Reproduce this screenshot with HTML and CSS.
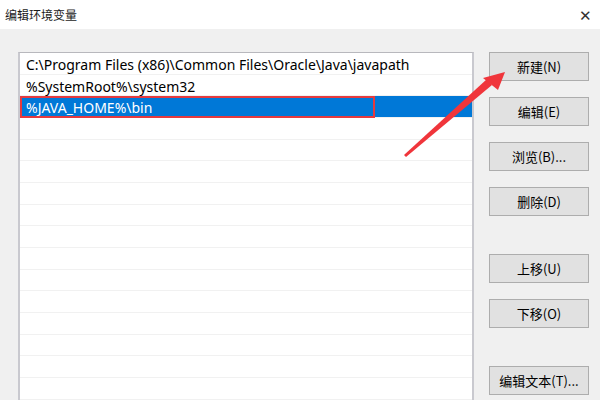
FILE: index.html
```html
<!DOCTYPE html>
<html lang="zh">

<head>
    <meta charset="UTF-8">
    <title>编辑环境变量</title>
    <link rel="stylesheet" href="styles.css">
</head>

<body>
    <div class="titlebar">
        <span class="title">编辑环境变量</span>
        <span class="close">&#x2715;</span>
    </div>

    <div class="content">
        <div class="pathlist">
            <div class="row">C:\Program Files (x86)\Common Files\Oracle\Java\javapath</div>
            <div class="row">%SystemRoot%\system32</div>
            <div class="row selected">%JAVA_HOME%\bin<span class="mark"></span></div>
            <div class="row"></div>
            <div class="row"></div>
            <div class="row"></div>
            <div class="row"></div>
            <div class="row"></div>
            <div class="row"></div>
            <div class="row"></div>
            <div class="row"></div>
            <div class="row"></div>
            <div class="row"></div>
            <div class="row"></div>
            <div class="row"></div>
            <div class="row"></div>
        </div>

        <div class="actions">
            <button class="btn">新建(N)</button>
            <button class="btn">编辑(E)</button>
            <button class="btn">浏览(B)...</button>
            <button class="btn">删除(D)</button>
            <button class="btn spaced">上移(U)</button>
            <button class="btn">下移(O)</button>
            <button class="btn spaced">编辑文本(T)...</button>
        </div>
    </div>

    <!-- annotation arrow pointing to the new button -->
    <svg class="arrow" width="600" height="400" viewBox="0 0 600 400">
        <polygon points="404,155 406,157 492,85 487,79" fill="#f0353b" />
        <polygon points="505,72 483,78 498,90" fill="#f0353b" />
    </svg>
</body>

</html>
```

FILE: styles.css
```css
/* General Styles */

body {
    font-family: "Noto Sans", "Noto Sans CJK SC", sans-serif;
    margin: 0;
    padding: 0;
    width: 600px;
    height: 400px;
    overflow: hidden;
    background: #f0f0f0;
    position: relative;
    color: #000;
}

.titlebar {
    height: 29px;
    background: #fff;
    display: flex;
    align-items: center;
    justify-content: space-between;
    padding: 0 8px 0 5px;
}

.title {
    font-family: "Noto Sans CJK SC", sans-serif;
    font-size: 12px;
    color: #1a1a1a;
}

.close {
    font-size: 15px;
    color: #333;
    font-weight: 300;
}

.content {
    display: flex;
    padding: 23px 0 0 18px;
}

/* Path list */

.pathlist {
    width: 452px;
    height: 360px;
    background: #fff;
    border: 2px solid #c9c9cf;
    border-top: 1px solid #b8b8bd;
    border-bottom: none;
    position: relative;
}

.row {
    box-sizing: border-box;
    height: 21.67px;
    line-height: 20px;
    padding: 2px 0 0 6px;
    border-bottom: 1px solid #f1f1f1;
    font-size: 14px;
    white-space: nowrap;
    position: relative;
}

.row.selected {
    background: #0078d7;
    color: #fff;
}

.row .mark {
    position: absolute;
    left: 0;
    top: 0;
    width: 351px;
    height: 18px;
    border: 2px solid #e53a3e;
}

/* Buttons */

.actions {
    display: flex;
    flex-direction: column;
    margin-left: 15px;
    gap: 16px;
}

.btn {
    width: 100px;
    height: 29px;
    padding: 0;
    background: #e1e1e1;
    border: 1px solid #adadad;
    font-family: "Noto Sans CJK SC", sans-serif;
    font-size: 13px;
    color: #000;
}

.btn.spaced {
    margin-top: 22px;
}

.arrow {
    position: absolute;
    left: 0;
    top: 0;
    pointer-events: none;
}
```
